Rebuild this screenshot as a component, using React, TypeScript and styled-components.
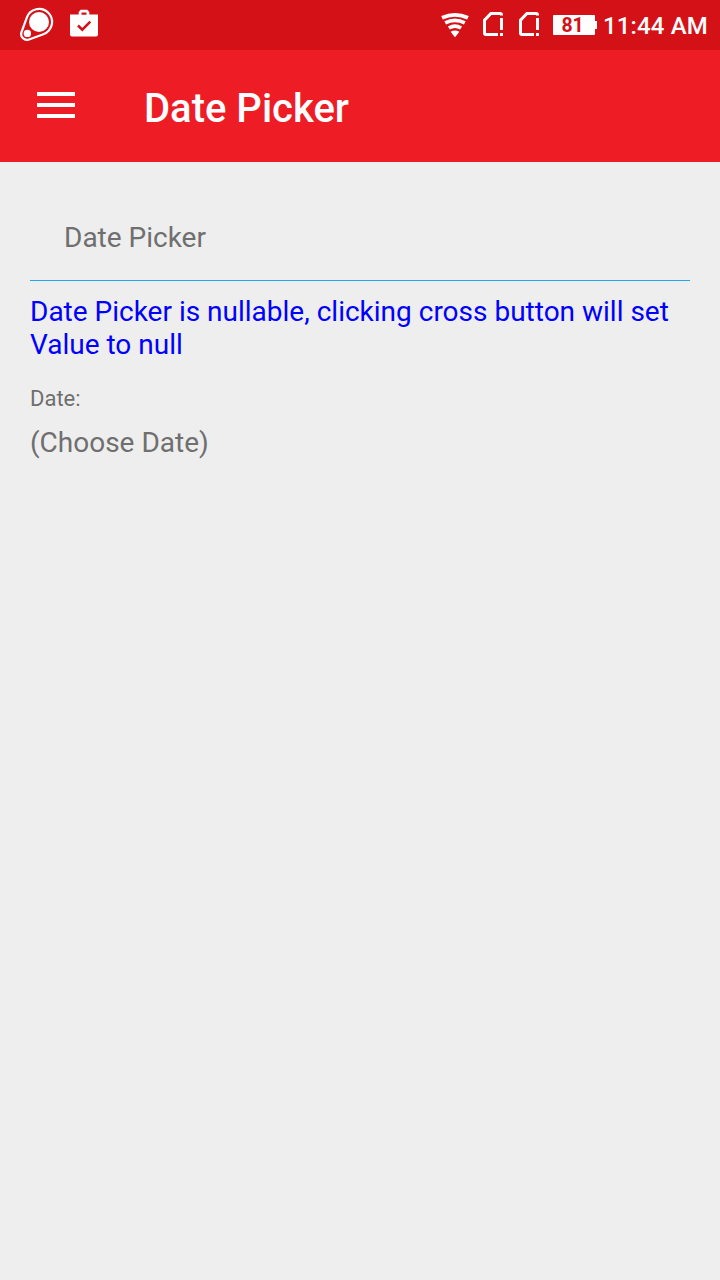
import React from "react";
import styled, { createGlobalStyle } from "styled-components";

const GlobalStyle = createGlobalStyle`
  * { box-sizing: border-box; }
  body {
    margin: 0;
    background: #eeeeee;
    font-family: Roboto, "Noto Sans", sans-serif;
  }
`;

const Screen = styled.div`
  width: 720px;
  min-height: 1280px;
  display: flex;
  flex-direction: column;
  background: #eeeeee;
`;

const StatusBar = styled.header`
  height: 50px;
  padding: 0 12px 0 18px;
  display: flex;
  justify-content: space-between;
  background: #d51118;
  color: #fff;
`;

const StatusGroup = styled.div`
  display: flex;
  align-items: flex-start;
`;

const Glyph = styled.svg<{ $gap?: number }>`
  display: block;
  flex: none;
  margin-right: ${({ $gap = 0 }) => $gap}px;
`;

const Battery = styled.div`
  display: flex;
  align-items: center;
  margin: 15px 6px 0 0;
  height: 20px;
`;

const BatteryBody = styled.div`
  width: 42px;
  height: 20px;
  border-radius: 1px;
  background: #fff;
  color: #d51118;
  font-size: 19.5px;
  font-weight: 700;
  line-height: 21px;
  letter-spacing: -0.3px;
  text-align: center;
  padding-right: 3px;
`;

const BatteryTip = styled.div`
  width: 2px;
  height: 8px;
  background: #fff;
`;

const Clock = styled.time`
  width: 105px;
  margin-top: 12px;
  font-size: 24px;
  font-weight: 500;
  line-height: 28px;
  letter-spacing: 0.15px;
  white-space: nowrap;
`;

const AppBar = styled.nav`
  height: 112px;
  padding: 35px 37px 0;
  display: flex;
  align-items: flex-start;
  background: #ee1c25;
  color: #fff;
`;

const MenuButton = styled.button`
  display: flex;
  flex-direction: column;
  gap: 7px;
  width: 38px;
  margin: 7px 69px 0 0;
  padding: 0;
  border: 0;
  background: none;
`;

const MenuBar = styled.span`
  height: 4px;
  background: #fff;
`;

const Title = styled.h1`
  margin: 0;
  font-size: 40px;
  font-weight: 500;
  line-height: 47px;
`;

const Content = styled.main`
  padding: 59px 30px 0;
  color: #6f6f6f;
  font-size: 28px;
  line-height: 33px;
`;

const SectionTitle = styled.h2`
  margin: 0;
  padding: 0 34px 26px;
  border-bottom: 1px solid #1ea7ee;
  font-size: 28px;
  font-weight: 400;
`;

const Note = styled.p`
  margin: 14px 0 0;
  color: #0000ff;
`;

const FieldLabel = styled.div`
  margin-top: 25px;
  font-size: 22px;
  line-height: 26px;
`;

const FieldValue = styled.div`
  margin-top: 14px;
`;

function TagIcon() {
  return (
    <Glyph $gap={16} width="36" height="50" viewBox="18 0 36 50">
      <path
        d="M26.8 17.6A13 13 0 1 1 43.4 34.2L29 39.45A5.8 5.8 0 0 1 21.55 32Z"
        fill="none"
        stroke="#fff"
        strokeWidth="2.2"
      />
      <circle cx="39" cy="22" r="10" fill="#fff" />
      <circle cx="27.4" cy="33.4" r="3.7" fill="#fff" />
    </Glyph>
  );
}

function BagIcon() {
  return (
    <Glyph width="28" height="50" viewBox="70 0 28 50">
      <path
        fill="#fff"
        fillRule="evenodd"
        d="M78.7 14.5V12L80.7 9.8H87.3L89.3 12V14.5H98V34.5Q98 36.5 96 36.5H72Q70 36.5 70 34.5V14.5ZM81.5 14.8H86.5V12.6H81.5Z"
      />
      <path d="M78 25.5L82.3 29.7L90.3 21.7" fill="none" stroke="#d51118" strokeWidth="2.5" />
    </Glyph>
  );
}

function WifiIcon() {
  return (
    <Glyph $gap={13} width="29" height="50" viewBox="441 0 29 50">
      <g fill="none" stroke="#fff" strokeWidth="3.7">
        <path d="M442 17.8Q455 12 468 17.8" />
        <path d="M445.2 22.9Q455 18 464.8 22.9" />
        <path d="M448.9 28Q455 24.2 461.1 28" />
      </g>
      <path d="M450.6 31.8Q455 29 459.4 31.8L455 37.2Z" fill="#fff" />
    </Glyph>
  );
}

function SimIcon({ gap }: { gap: number }) {
  return (
    <Glyph $gap={gap} width="20" height="50" viewBox="0 0 20 50">
      <path
        d="M15 34.5H3Q1.5 34.5 1.5 33V20.2L7.9 13.5H17Q18.5 13.5 18.5 15V15.4"
        fill="none"
        stroke="#fff"
        strokeWidth="3"
      />
      <path d="M17 18H20V30H17ZM17 33H20V36H17Z" fill="#fff" />
    </Glyph>
  );
}

export default function App() {
  return (
    <>
      <GlobalStyle />
      <Screen>
        <StatusBar>
          <StatusGroup>
            <TagIcon />
            <BagIcon />
          </StatusGroup>
          <StatusGroup>
            <WifiIcon />
            <SimIcon gap={16} />
            <SimIcon gap={14} />
            <Battery>
              <BatteryBody>81</BatteryBody>
              <BatteryTip />
            </Battery>
            <Clock>11:44 AM</Clock>
          </StatusGroup>
        </StatusBar>
        <AppBar>
          <MenuButton aria-label="Menu">
            <MenuBar />
            <MenuBar />
            <MenuBar />
          </MenuButton>
          <Title>Date Picker</Title>
        </AppBar>
        <Content>
          <SectionTitle>Date Picker</SectionTitle>
          <Note>Date Picker is nullable, clicking cross button will set Value to null</Note>
          <FieldLabel>Date:</FieldLabel>
          <FieldValue>(Choose Date)</FieldValue>
        </Content>
      </Screen>
    </>
  );
}
